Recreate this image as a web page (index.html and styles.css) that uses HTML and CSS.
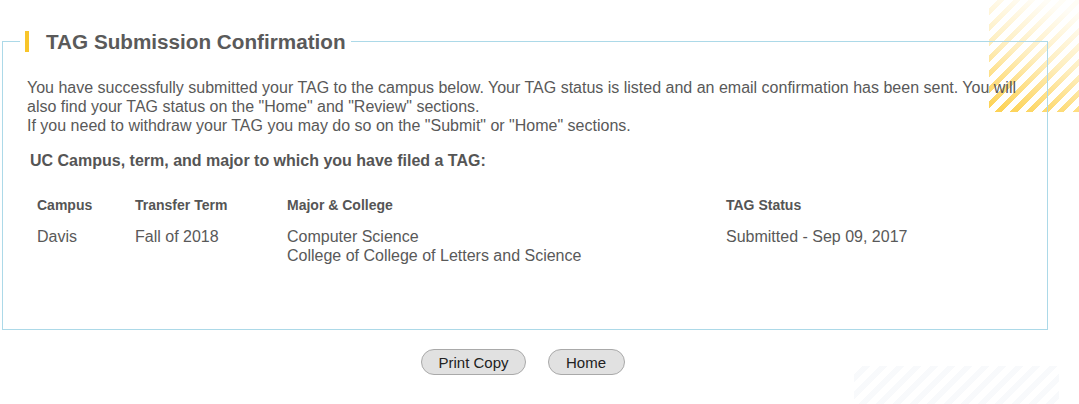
FILE: index.html
```html
<!DOCTYPE html>
<html>
<head>
    <title>TAG Submission Confirmation</title>
    <link rel="stylesheet" href="styles.css">
</head>
<body>
    <div class="stripes-top"></div>
    <div class="stripes-bottom"></div>

    <div class="page">
        <fieldset class="confirm-box">
            <legend><span class="legend-bar">TAG Submission Confirmation</span></legend>

            <p class="intro">You have successfully submitted your TAG to the campus below. Your TAG status is listed and an email confirmation has been sent. You will also find your TAG status on the "Home" and "Review" sections.<br>If you need to withdraw your TAG you may do so on the "Submit" or "Home" sections.</p>

            <h4 class="filed-title">UC Campus, term, and major to which you have filed a TAG:</h4>

            <div class="tag-table">
                <div class="th">Campus</div>
                <div class="th">Transfer Term</div>
                <div class="th">Major &amp; College</div>
                <div class="th">TAG Status</div>

                <div class="td">Davis</div>
                <div class="td">Fall of 2018</div>
                <div class="td">Computer Science<br>College of College of Letters and Science</div>
                <div class="td">Submitted - Sep 09, 2017</div>
            </div>
        </fieldset>

        <div class="actions">
            <button type="button">Print Copy</button>
            <button type="button">Home</button>
        </div>
    </div>
</body>
</html>
```

FILE: styles.css
```css
body {
    margin: 0;
    font-family: "Liberation Sans", Arial, sans-serif;
    font-size: 16px;
    color: #595959;
    background: #fff;
    position: relative;
    min-height: 404px;
    overflow: hidden;
}
.stripes-top {
    position: absolute;
    top: 0;
    right: 0;
    width: 90px;
    height: 112px;
    background: repeating-linear-gradient(135deg, transparent 0 6px, #fdd14f 6px 11px);
    -webkit-mask-image: linear-gradient(200deg, rgba(0,0,0,0.05) 10%, rgba(0,0,0,0.35) 50%, rgba(0,0,0,0.95) 95%);
    mask-image: linear-gradient(200deg, rgba(0,0,0,0.05) 10%, rgba(0,0,0,0.35) 50%, rgba(0,0,0,0.95) 95%);
    z-index: 0;
}
.stripes-bottom {
    position: absolute;
    right: 20px;
    bottom: 0;
    width: 205px;
    height: 38px;
    background: repeating-linear-gradient(135deg, transparent 0 6px, #f1f4f8 6px 12px);
    opacity: 0.5;
    z-index: 0;
}
.page {
    position: relative;
    z-index: 1;
    width: 1046px;
    margin-left: 2px;
    padding-top: 31px;
}
.confirm-box {
    margin: 0;
    padding: 26px 24px 31px 24px;
    border: 1px solid #acd9e8;
    box-sizing: border-box;
    height: 299px;
}
.confirm-box legend {
    margin-left: -7px;
    padding: 0 5px;
    background: #fff;
}
.legend-bar {
    display: block;
    border-left: 4px solid #f8c52a;
    padding-left: 17px;
    font-size: 20.7px;
    line-height: 21px;
    font-weight: bold;
    color: #5a5a5a;
}
.intro {
    margin: 0;
    line-height: 19px;
}
.filed-title {
    margin: 16px 0 0 3px;
    font-size: 16px;
    line-height: 19px;
    color: #555;
}
.tag-table {
    display: grid;
    grid-template-columns: 98px 152px 439px auto;
    margin: 26px 0 0 10px;
}
.th {
    font-size: 14px;
    font-weight: bold;
    line-height: 18px;
    color: #555;
    padding-bottom: 13px;
}
.td {
    line-height: 19px;
}
.actions {
    display: flex;
    justify-content: center;
    gap: 22px;
    margin-top: 19px;
    margin-left: -4px;
}
.actions button {
    font-family: "Liberation Sans", Arial, sans-serif;
    font-size: 15px;
    color: #222;
    background: #e1e1e1;
    border: 1px solid #a9a9a9;
    border-radius: 13px;
    height: 26px;
    min-width: 77px;
    padding: 0 16px;
}
```
